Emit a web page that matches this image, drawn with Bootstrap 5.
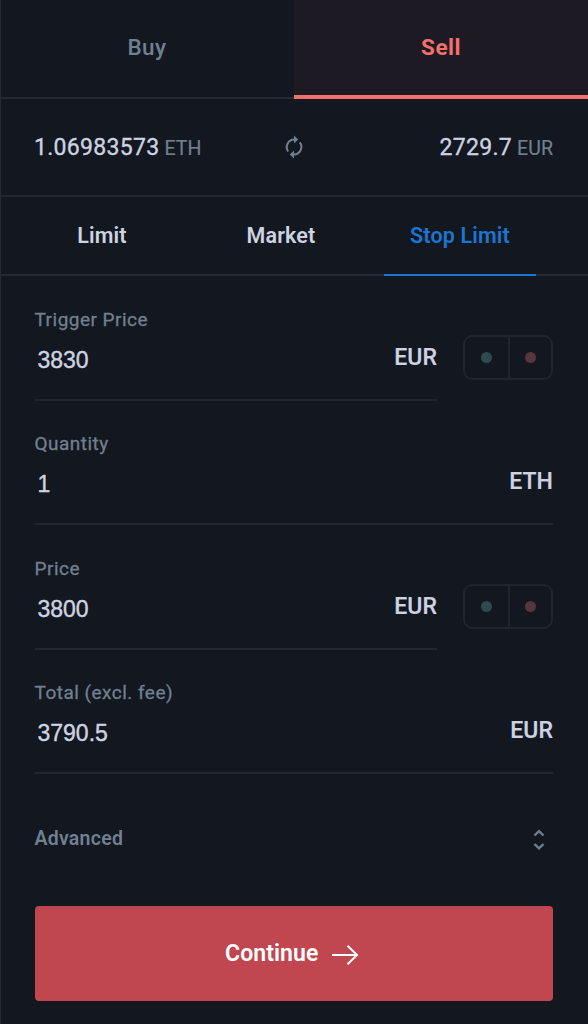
<!DOCTYPE html>
<html lang="en" data-bs-theme="dark">
<head>
<meta charset="utf-8">
<meta name="viewport" content="width=device-width, initial-scale=1">
<title>Sell ETH</title>
<link href="https://cdn.jsdelivr.net/npm/bootstrap@5.3.0/dist/css/bootstrap.min.css" rel="stylesheet">
<style>
  :root { --line: #252933; --muted: #708090; --light: #cdd3e0; --coral: #f4706b; --blue: #1976d2; }
  body { background: #131720; color: var(--light); font-family: Roboto, "Liberation Sans", sans-serif; box-shadow: inset 1px 0 var(--line); }
  .ticket { height: 1024px; overflow: hidden; }
  .side-tabs { height: 99px; }
  .side-tab { border: 0; border-bottom: 2px solid var(--line); border-radius: 0; background: none; color: var(--muted); font-size: 22.5px; font-weight: 500; letter-spacing: .5px; line-height: 94px; padding: 0 0 5px; }
  .side-tab.chosen { background: #1e1a24; color: var(--coral); border-bottom: 4px solid var(--coral); font-weight: 700; padding-bottom: 4px; }
  .balances { height: 98px; border-bottom: 2px solid #222630; padding: 0 35px 0 34px; line-height: 98px; }
  .amount { font-size: 23px; letter-spacing: .3px; -webkit-text-stroke: .35px; }
  .unit { font-size: 19.5px; color: var(--muted); letter-spacing: .1px; margin-left: 1px; -webkit-text-stroke: .2px; }
  .order-tabs { height: 79px; border-bottom: 2px solid var(--line); padding: 0 52px 0 26px; }
  .order-tab { border: 0; background: none; color: var(--light); font-size: 21.5px; font-weight: 600; letter-spacing: .15px; line-height: 77px; height: 79px; padding: 0 0 2px; }
  .order-tab.chosen { color: var(--blue); border-bottom: 2px solid var(--blue); padding: 0; }
  .order-form { padding: 0 35px 0 34.5px; }
  .entry { height: 124.4px; }
  .entry-main { border-bottom: 2px solid #222630; padding-top: 30px; height: 125px; }
  .entry.full { margin-top: -.4px; height: 124.8px; }
  .entry label { display: block; font-size: 19px; letter-spacing: .48px; line-height: 27px; color: var(--muted); font-weight: 400; -webkit-text-stroke: .3px; }
  .entry input { border: 0; background: none; outline: 0; color: var(--light); font: 23px/30px "Liberation Sans", Arial, sans-serif; padding: 0 0 0 3px; height: 30px; min-width: 0; margin-top: 12px; -webkit-text-stroke: .4px; }
  .currency { font-size: 23px; font-weight: 500; line-height: 30px; margin-top: 10px; letter-spacing: .1px; -webkit-text-stroke: .2px; }
  .sides { width: 90px; height: 45px; margin: 59px 0 0 26px; border: 2px solid #20242e; border-radius: 9px; }
  .sides button { border: 0; background: none; padding: 0; }
  .sides button + button { border-left: 2px solid #20242e; }
  .dot { width: 11px; height: 11px; border-radius: 50%; background: #2f4a4e; }
  .dot.red { background: #57363f; }
  .advanced { height: 132px; font-size: 19.5px; font-weight: 600; letter-spacing: .25px; color: var(--muted); line-height: 127px; padding-right: 8px; }
  .advanced span { margin-top: -3px; }
  .go { height: 95px; background: #c04750; color: #fff; border: 0; border-radius: 4px; font-size: 23px; font-weight: 600; letter-spacing: .1px; gap: 14px; padding: 2px 3px 0 0; }
  .go svg { margin-top: 2px; }
</style>
</head>
<body>
<main class="ticket">
  <nav class="side-tabs d-flex">
    <button class="side-tab w-50">Buy</button>
    <button class="side-tab chosen w-50">Sell</button>
  </nav>
  <section class="balances d-flex justify-content-between position-relative">
    <div><span class="amount">1.06983573</span> <span class="unit">ETH</span></div>
    <svg class="position-absolute top-50 start-50 translate-middle" width="22" height="24" viewBox="0 0 22 24" fill="none" stroke="#708090" stroke-width="2"><path d="M5.200 16.500A7.500 7.500 0 0 1 11.200 4.600h1M16.800 7.300a7.500 7.500 0 0 1-6 12.100h-1"/><path d="M11 .6l4.200 4-4.200 4zM11 15.400l-4.200 4 4.200 4z" fill="#708090" stroke="none"/></svg>
    <div><span class="amount">2729.7</span> <span class="unit">EUR</span></div>
  </section>
  <nav class="order-tabs d-flex">
    <button class="order-tab" style="width:152px">Limit</button>
    <button class="order-tab" style="width:206px">Market</button>
    <button class="order-tab chosen" style="width:152px">Stop Limit</button>
  </nav>
  <form class="order-form">
    <div class="entry d-flex align-items-start">
      <div class="entry-main flex-grow-1">
        <label for="trigger">Trigger Price</label>
        <div class="d-flex"><input id="trigger" class="flex-grow-1" value="3830"><span class="currency">EUR</span></div>
      </div>
      <div class="sides d-flex"><button type="button" class="w-50 d-flex align-items-center justify-content-center" aria-label="Best bid"><span class="dot"></span></button><button type="button" class="w-50 d-flex align-items-center justify-content-center" aria-label="Best ask"><span class="dot red"></span></button></div>
    </div>
    <div class="entry full">
      <div class="entry-main">
        <label for="quantity">Quantity</label>
        <div class="d-flex"><input id="quantity" class="flex-grow-1" value="1"><span class="currency">ETH</span></div>
      </div>
    </div>
    <div class="entry d-flex align-items-start">
      <div class="entry-main flex-grow-1">
        <label for="price">Price</label>
        <div class="d-flex"><input id="price" class="flex-grow-1" value="3800"><span class="currency">EUR</span></div>
      </div>
      <div class="sides d-flex"><button type="button" class="w-50 d-flex align-items-center justify-content-center" aria-label="Best bid"><span class="dot"></span></button><button type="button" class="w-50 d-flex align-items-center justify-content-center" aria-label="Best ask"><span class="dot red"></span></button></div>
    </div>
    <div class="entry full">
      <div class="entry-main">
        <label for="total">Total (excl. fee)</label>
        <div class="d-flex"><input id="total" class="flex-grow-1" value="3790.5"><span class="currency">EUR</span></div>
      </div>
    </div>
    <div class="advanced d-flex justify-content-between align-items-center">
      <span>Advanced</span>
      <svg width="12" height="22" viewBox="0 0 12 22" fill="none" stroke="#708090" stroke-width="2.4"><path d="M1.500 6.500 6 2.200l4.500 4.300M1.500 15l4.500 4.300 4.500-4.300"/></svg>
    </div>
    <button type="button" class="go w-100 d-flex justify-content-center align-items-center">Continue
      <svg width="27" height="22" viewBox="0 0 27 22" fill="none" stroke="#fff" stroke-width="2"><path d="M0 11h25M15.500 1.800 25 11l-9.500 9.200"/></svg>
    </button>
  </form>
</main>
<script src="https://cdn.jsdelivr.net/npm/bootstrap@5.3.0/dist/js/bootstrap.bundle.min.js"></script>
</body>
</html>
